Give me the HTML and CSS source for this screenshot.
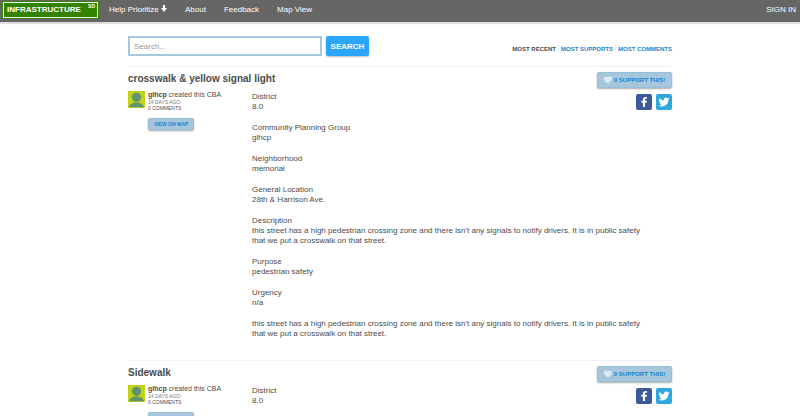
FILE: index.html
```html
<!DOCTYPE html>
<html lang="en">
<head>
<meta charset="utf-8">
<title>Infrastructure SD</title>
<link rel="stylesheet" href="styles.css">
</head>
<body>
<svg class="sprite" aria-hidden="true">
  <symbol id="avatar" viewBox="0 0 17 17"><path fill="#c3d117" d="M0 0h17v17H0z"/><circle cx="8.5" cy="6.3" r="4.6" fill="#5f9470"/><path fill="#5f9470" d="M1 16.2c1-3 3.8-4.600 7.500-4.600s6.500 1.600 7.500 4.600z"/></symbol>
  <symbol id="heart" viewBox="0 0 16 14"><path d="M8 14C3 10 0 7.500 0 4.300 0 1.800 1.800 0 4.200 0 5.800 0 7.200.9 8 2.200 8.800.9 10.200 0 11.800 0 14.200 0 16 1.800 16 4.300 16 7.500 13 10 8 14z"/></symbol>
  <symbol id="facebook" viewBox="0 0 16 16"><path d="M9 13V8.700h1.600l.3-1.900H9V5.700c0-.6.200-.9.900-.9h1V3.100c-.4-.1-.9-.1-1.400-.1-1.700 0-2.600.9-2.600 2.500v1.300H5.400v1.900h1.500V13z"/></symbol>
  <symbol id="twitter" viewBox="0 0 24 24"><path d="M23 5.100a9 9 0 0 1-2.600.7 4.500 4.500 0 0 0 2-2.500 9 9 0 0 1-2.900 1.100 4.500 4.500 0 0 0-7.700 4.100A12.800 12.800 0 0 1 2.500 3.800a4.500 4.500 0 0 0 1.400 6 4.500 4.500 0 0 1-2-.6c0 2.200 1.500 4.100 3.600 4.500a4.500 4.500 0 0 1-2 .1 4.500 4.500 0 0 0 4.200 3.100A9 9 0 0 1 1 18.800a12.800 12.800 0 0 0 19.700-11.400A9 9 0 0 0 23 5.100z"/></symbol>
</svg>
<header class="topbar">
  <a class="logo" href="#">INFRASTRUCTURE<sup>SD</sup></a>
  <nav class="menu">
    <a href="#">Help Prioritize <svg class="arrow" viewBox="0 0 6 7" aria-hidden="true"><path d="M2 0h2v3h2L3 7 0 3h2z"/></svg></a>
    <a href="#">About</a>
    <a href="#">Feedback</a>
    <a href="#">Map View</a>
  </nav>
  <a class="signin" href="#">SIGN IN</a>
</header>
<main class="page">
  <div class="tools">
    <form class="search">
      <input type="text" placeholder="Search..." aria-label="Search">
      <button type="button">SEARCH</button>
    </form>
    <nav class="sort">
      <span>MOST RECENT</span>
      <a href="#">MOST SUPPORTS</a>
      <a href="#">MOST COMMENTS</a>
    </nav>
  </div>
  <article class="item">
    <div class="heading">
      <h2>crosswalk &amp; yellow signal light</h2>
      <button class="soft support" type="button"><svg class="heart" aria-hidden="true"><use href="#heart"/></svg>0 SUPPORT THIS!</button>
    </div>
    <div class="content">
      <div class="author">
        <svg class="avatar" aria-hidden="true"><use href="#avatar"/></svg>
        <div>
          <p class="by"><b>glhcp</b> created this CBA</p>
          <p class="meta age">14 DAYS AGO</p>
          <p class="meta">0 COMMENTS</p>
          <button class="soft map" type="button">VIEW ON MAP</button>
        </div>
      </div>
      <div class="details">
        <p>District<br>8.0</p>
        <p>Community Planning Group<br>glhcp</p>
        <p>Neighborhood<br>memorial</p>
        <p>General Location<br>28th &amp; Harrison Ave.</p>
        <p>Description<br>this street has a high pedestrian crossing zone and there isn't any signals to notify drivers. It is in public safety that we put a crosswalk on that street.</p>
        <p>Purpose<br>pedestrian safety</p>
        <p>Urgency<br>n/a</p>
        <p>this street has a high pedestrian crossing zone and there isn't any signals to notify drivers. It is in public safety that we put a crosswalk on that street.</p>
      </div>
      <div class="share">
        <a class="fb" href="#" aria-label="Share on Facebook"><svg><use href="#facebook"/></svg></a>
        <a class="tw" href="#" aria-label="Share on Twitter"><svg><use href="#twitter"/></svg></a>
      </div>
    </div>
  </article>
  <article class="item">
    <div class="heading">
      <h2>Sidewalk</h2>
      <button class="soft support" type="button"><svg class="heart" aria-hidden="true"><use href="#heart"/></svg>0 SUPPORT THIS!</button>
    </div>
    <div class="content">
      <div class="author">
        <svg class="avatar" aria-hidden="true"><use href="#avatar"/></svg>
        <div>
          <p class="by"><b>glhcp</b> created this CBA</p>
          <p class="meta age">14 DAYS AGO</p>
          <p class="meta">0 COMMENTS</p>
          <button class="soft map" type="button">VIEW ON MAP</button>
        </div>
      </div>
      <div class="details">
        <p>District<br>8.0</p>
      </div>
      <div class="share">
        <a class="fb" href="#" aria-label="Share on Facebook"><svg><use href="#facebook"/></svg></a>
        <a class="tw" href="#" aria-label="Share on Twitter"><svg><use href="#twitter"/></svg></a>
      </div>
    </div>
  </article>
</main>
</body>
</html>
```
FILE: styles.css
```css
* { box-sizing: border-box; }
html { scrollbar-width: none; }
body {
  margin: 0;
  background: #fff;
  color: #4c4c4c;
  font-family: "Liberation Sans", Arial, sans-serif;
  font-size: 8px;
  line-height: 10px;
}
p, h2 { margin: 0; }
a { color: #1783cc; text-decoration: none; }
button, input { font-family: inherit; }
.sprite { position: absolute; width: 0; height: 0; }

.topbar {
  display: flex;
  align-items: center;
  height: 22px;
  padding: 0 4px 2px 2px;
  background: #666;
  box-shadow: 0 2px 1px #ddd;
}
.topbar a { color: #fff; }
.logo {
  display: flex;
  justify-content: space-between;
  width: 97px;
  height: 18px;
  padding: 3px 3px 0 4px;
  border: 1px solid #338200;
  box-shadow: inset 0 0 0 1px #eaf7e0;
  background: #338200;
  font-size: 8px;
  font-weight: bold;
  line-height: 10px;
}
.logo sup { font-size: 5px; line-height: 5px; margin-top: -1px; }
.menu { display: flex; gap: 18px; margin-left: 10px; flex: 1; }
.arrow { width: 6px; height: 7px; fill: #fff; }

.page { width: 68%; margin: 0 auto; }
.tools {
  display: flex;
  justify-content: space-between;
  padding: 14px 0 10px;
}
.search { display: flex; gap: 4px; }
.search input {
  width: 194px;
  height: 20px;
  padding: 0 4px;
  border: 2px solid #a4c9df;
  color: #555;
  font-size: 8px;
}
.search input::placeholder { color: #999; }
.search button {
  height: 20px;
  width: 43px;
  padding: 0;
  border: 0;
  border-radius: 2px;
  background: #2ba6ff;
  box-shadow: 0 1px 2px #bbb;
  color: #fff;
  font-size: 8px;
  font-weight: bold;
}
.sort {
  display: flex;
  align-items: center;
  padding-top: 6px;
  font-size: 6px;
  font-weight: bold;
  line-height: 8px;
}
.sort > * + * { margin-left: 2px; padding-left: 2px; border-left: 1px solid #eee; }

.item { border-top: 1px solid #f0f0f0; padding: 5px 0 21px; }
.heading {
  display: flex;
  justify-content: space-between;
  height: 16px;
}
h2 { font-size: 10px; line-height: 13px; }
.soft {
  display: flex;
  align-items: center;
  justify-content: center;
  padding: 0;
  border: 1px solid #98bfd8;
  border-radius: 2px;
  background: #a5c6dc;
  box-shadow: 0 1px 2px #aaa;
  color: #1783cc;
  font-weight: bold;
}
.support { gap: 2px; width: 75px; height: 16px; font-size: 6px; }
.heart { width: 8px; height: 8px; fill: #dcebf5; }
.content {
  display: grid;
  grid-template-columns: 124px 1fr 36px;
  padding-top: 3px;
}
.author { display: flex; gap: 3px; align-items: flex-start; }
.avatar { width: 17px; height: 17px; }
.by { font-size: 7px; line-height: 8px; }
.meta { font-size: 5px; line-height: 6px; }
.age { color: #777; }
.map { width: 46px; height: 12px; margin-top: 7px; font-size: 5px; }
.details { margin-right: -10px; padding-top: 1px; }
.details p + p { margin-top: 11px; }
.share { display: flex; gap: 4px; padding-top: 3px; }
.share a { width: 16px; height: 16px; border-radius: 2px; }
.share svg { display: block; width: 16px; height: 16px; fill: #fff; }
.fb { background: #3c5a99; }
.share .tw { padding: 2px; background: #2fa8e0; }
.share .tw svg { width: 12px; height: 12px; }
```
